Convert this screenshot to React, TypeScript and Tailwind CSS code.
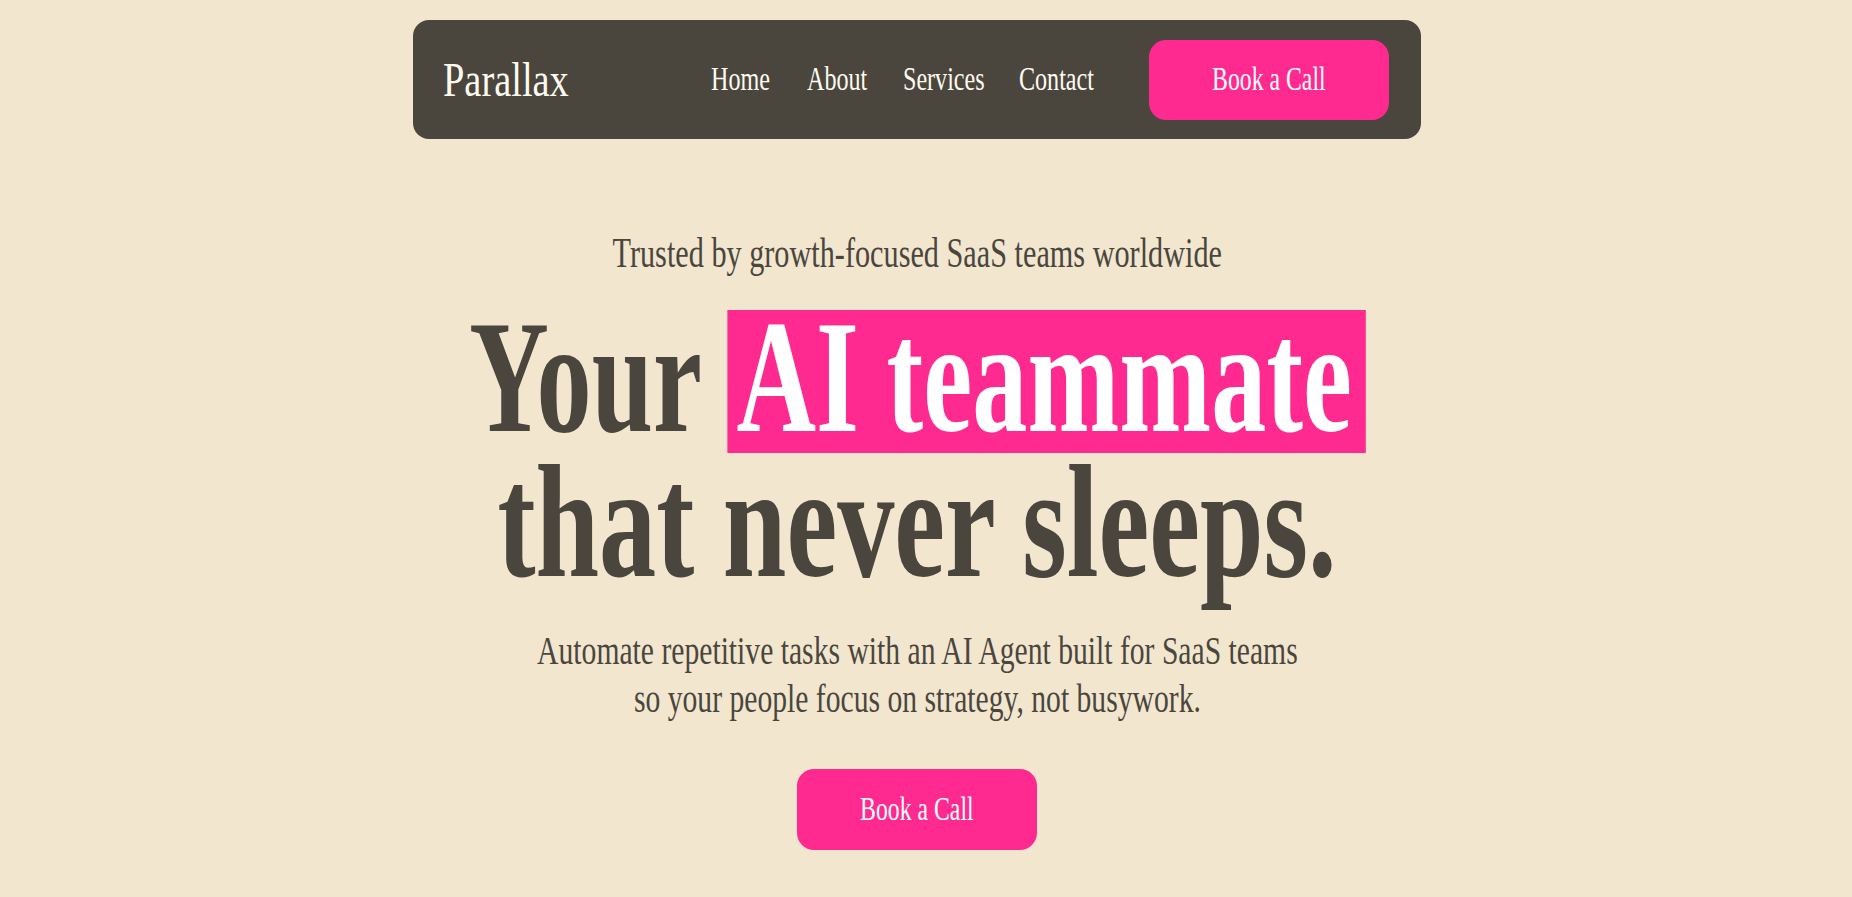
const navLinks = [
  { label: "Home", slot: "w-[60px]" },
  { label: "About", slot: "w-[60px]" },
  { label: "Services", slot: "w-[80px]" },
  { label: "Contact", slot: "w-[78px]" },
];

export default function App() {
  return (
    // pr accounts for the scrollbar gutter of the original page
    <div className="min-h-[1100px] bg-[#f2e6cf] pr-[18px] font-['Liberation_Serif','Times_New_Roman',serif] text-[#4a463e]">
      {/* top bar */}
      <header className="pt-5">
        <nav className="mx-auto flex h-[119px] w-[1008px] items-center rounded-[16px] bg-[#4a463e] pl-[30px] pr-[32px] text-[#fffaf0]">
          <a href="#" className="block w-[124px] shrink-0 text-[48px] leading-none">
            <span className="inline-block origin-left scale-x-[0.8] whitespace-nowrap">Parallax</span>
          </a>
          <ul className="ml-auto flex items-center gap-[36px] text-[33px] leading-none">
            {navLinks.map((l) => (
              <li key={l.label} className={l.slot}>
                <a href="#" className="inline-block origin-left scale-x-[0.73] whitespace-nowrap">
                  {l.label}
                </a>
              </li>
            ))}
          </ul>
          <a
            href="#"
            className="ml-[52px] flex h-[80px] w-[240px] shrink-0 items-center justify-center rounded-[17px] bg-[#ff2a8f] text-[33px] leading-none text-white"
          >
            <span className="inline-block scale-x-[0.72] whitespace-nowrap">Book a Call</span>
          </a>
        </nav>
      </header>

      {/* hero */}
      <main className="flex flex-col items-center text-center">
        <p className="mt-[90px] text-[42px] leading-[48px]">
          <span className="inline-block scale-x-[0.72] whitespace-nowrap">
            Trusted by growth-focused SaaS teams worldwide
          </span>
        </p>

        <h1 className="mt-[28px] text-[161px] font-bold">
          <div className="h-[145px] leading-[145px]">
            <span className="inline-block scale-x-[0.685] whitespace-nowrap">
              Your{" "}
              <span className="inline-block bg-[#ff2a8f] pb-[8px] pl-[13px] pr-[20px] leading-[135px] text-white">
                AI teammate
              </span>
            </span>
          </div>
          <div className="h-[145px] leading-[145px]">
            <span className="inline-block scale-x-[0.71] whitespace-nowrap">that never sleeps.</span>
          </div>
        </h1>

        <p className="mt-[32px] text-[39px] leading-[48px]">
          <span className="inline-block scale-x-[0.76] whitespace-nowrap">
            Automate repetitive tasks with an AI Agent built for SaaS teams
            <br />
            so your people focus on strategy, not busywork.
          </span>
        </p>

        <a
          href="#"
          className="mt-[46px] flex h-[81px] w-[240px] items-center justify-center rounded-[17px] bg-[#ff2a8f] text-[33px] leading-none text-white"
        >
          <span className="inline-block scale-x-[0.72] whitespace-nowrap">Book a Call</span>
        </a>
      </main>
    </div>
  );
}
